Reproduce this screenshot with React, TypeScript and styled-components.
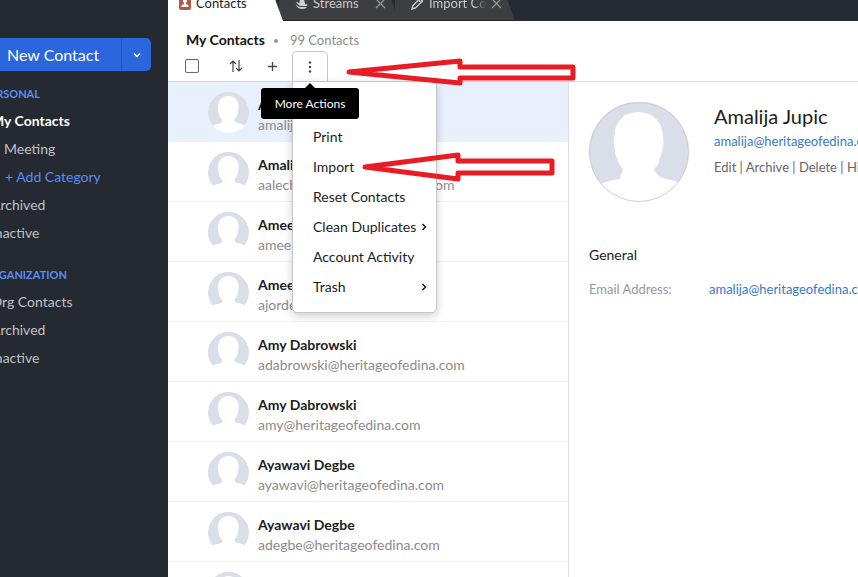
import React from "react";
import styled, { createGlobalStyle, css } from "styled-components";

const GlobalStyle = createGlobalStyle`
  * { box-sizing: border-box; }
  html, body, #root { height: 100%; }
  body {
    margin: 0;
    overflow: hidden;
    font-family: Lato, "Liberation Sans", sans-serif;
    font-size: 14px;
    line-height: 20px;
    color: #1c1c1c;
    background: #fff;
  }
  button, input { font: inherit; color: inherit; }
  button { border: 0; padding: 0; background: none; cursor: pointer; }
  a { color: inherit; text-decoration: none; }
  ul { list-style: none; margin: 0; padding: 0; }
  h1, h2, h3, p, dl, dd { margin: 0; font-weight: 400; }
`;

const Page = styled.div`
  position: relative;
  display: flex;
  height: 100vh;
  overflow: hidden;
`;

const Sidebar = styled.aside`
  flex: 0 0 168px;
  padding-top: 38px;
  background: #252932;
  color: #bfc1c6;
  overflow: hidden;
`;

const SplitButton = styled.div`
  display: flex;
  width: 151px;
  height: 33px;
  border-radius: 0 5px 5px 0;
  background: #2b66dd;
  color: #fff;
`;

const NewButton = styled.button`
  flex: 1;
  padding: 0 0 0 7px;
  font-size: 16px;
  text-align: left;
`;

const NewMenuButton = styled.button`
  display: flex;
  align-items: center;
  justify-content: center;
  width: 30px;
  border-left: 1px solid #2357c2;
`;

const NavGroup = styled.nav`
  margin: 13px 0 0 -17px;
  & + & { margin-top: 18px; }
`;

const NavTitle = styled.h3`
  height: 23px;
  font-size: 11px;
  font-weight: 700;
  color: #5b8def;
`;

const NavLink = styled.a<{ $tone?: "active" | "accent"; $indent?: number }>`
  display: block;
  height: 28px;
  padding-left: ${(p) => p.$indent ?? 0}px;
  line-height: 27px;
  white-space: nowrap;
  ${(p) => p.$tone === "active" && css`color: #fff; font-weight: 700;`}
  ${(p) => p.$tone === "accent" && css`color: #5b8def;`}
`;

const Main = styled.main`
  flex: 1;
  min-width: 0;
  display: flex;
  flex-direction: column;
`;

const TabBar = styled.div`
  display: flex;
  height: 21px;
  overflow: hidden;
  background: #252a35;
`;

const Tab = styled.button<{ $active?: boolean }>`
  display: flex;
  flex: none;
  align-items: center;
  gap: 5px;
  height: 33px;
  margin: -12px 0 0 -4px;
  width: ${(p) => (p.$active ? 119 : 120)}px;
  padding: ${(p) => (p.$active ? "0 18px 2px 15px" : "0 13px 2px 16px")};
  border-bottom: 1px solid ${(p) => (p.$active ? "#fff" : "#222")};
  font-size: 13px;
  white-space: nowrap;
  color: ${(p) => (p.$active ? "#1c1c1c" : "#c9c9c9")};
  background: ${(p) => (p.$active ? "#fff" : "#3d3e42")};
  clip-path: polygon(0 0, calc(100% - 12px) 0, 100% 100%, 0 100%);
  position: relative;
  z-index: ${(p) => (p.$active ? 2 : 1)};
  & > svg { flex: none; }
`;

const TabLabel = styled.span<{ $fade?: boolean }>`
  flex: 1;
  overflow: hidden;
  text-align: left;
  ${(p) => p.$fade && css`mask-image: linear-gradient(to right, #000 80%, transparent);`}
`;

const Heading = styled.header`
  display: flex;
  align-items: center;
  height: 30px;
  padding: 8px 0 0 18px;
  font-size: 13px;
  color: #8b8b8b;
`;

const Title = styled.h1`
  font-size: 14px;
  font-weight: 700;
  color: #111;
`;

const Dot = styled.span`
  width: 4px;
  height: 4px;
  margin: 2px 12px 0 9px;
  border-radius: 50%;
  background: #999;
`;

const Toolbar = styled.div`
  display: flex;
  align-items: stretch;
  height: 31px;
  padding-left: 17px;
  border-bottom: 1px solid #d6d6d6;
  color: #444;
`;

const Check = styled.input`
  appearance: none;
  align-self: center;
  width: 14px;
  height: 14px;
  margin: 0 18px 0 0;
  border: 1px solid #666;
  border-radius: 2px;
  background: #fff;
`;

const Tool = styled.button`
  display: flex;
  align-items: center;
  justify-content: center;
  width: 37px;
`;

const MoreWrap = styled.div`
  position: relative;
  width: 36px;
  height: 31px;
  margin-left: 1px;
`;

const MoreButton = styled.button`
  display: flex;
  align-items: center;
  justify-content: center;
  width: 36px;
  height: 31px;
  border: 1px solid #c6c6c6;
  border-radius: 5px 5px 0 0;
  background: #fff;
`;

const Menu = styled.ul`
  position: absolute;
  z-index: 5;
  top: 30px;
  left: 0;
  width: 145px;
  padding: 40px 8px 10px 20px;
  border: 1px solid #c6c6c6;
  border-radius: 0 0 5px 5px;
  background: #fff;
  color: #1c1c1c;
  box-shadow: 0 3px 8px rgba(0, 0, 0, 0.2);
`;

const MenuItem = styled.button`
  display: flex;
  align-items: center;
  justify-content: space-between;
  width: 100%;
  height: 30px;
  white-space: nowrap;
`;

const Tooltip = styled.div`
  position: absolute;
  z-index: 6;
  top: 37px;
  left: -31px;
  width: 98px;
  height: 31px;
  border-radius: 3px;
  background: #000;
  color: #fff;
  font-size: 12px;
  line-height: 31px;
  text-align: center;
  &::before {
    content: "";
    position: absolute;
    top: -5px;
    left: 44px;
    border: 5px solid transparent;
    border-top: 0;
    border-bottom-color: #000;
  }
`;

const Content = styled.div`
  flex: 1;
  min-height: 0;
  display: flex;
`;

const List = styled.ul`
  flex: 0 0 401px;
  overflow: hidden;
  border-right: 1px solid #dedede;
`;

const Row = styled.li<{ $selected?: boolean }>`
  display: flex;
  gap: 9px;
  height: 60px;
  padding: 10px 0 0 40px;
  border-bottom: 1px solid ${(p) => (p.$selected ? "#e8f0fe" : "#f0f0f0")};
  background: ${(p) => (p.$selected ? "#e8f0fe" : "#fff")};
`;

const RowText = styled.div`
  padding-top: 3px;
`;

const Name = styled.p`
  font-weight: 700;
`;

const Mail = styled.p`
  color: #8b8b8b;
`;

const Details = styled.section`
  flex: 1;
  min-width: 0;
  padding: 20px 0 0 20px;
  overflow: hidden;
  white-space: nowrap;
`;

const Profile = styled.div`
  display: flex;
  gap: 25px;
`;

const PersonName = styled.h2`
  margin: 2px 0 3px;
  font-size: 20px;
  line-height: 24px;
`;

const Link = styled.a`
  font-size: 13px;
  color: #3b78c9;
`;

const Actions = styled.p`
  margin-top: 6px;
  font-size: 13px;
  color: #666;
`;

const SectionTitle = styled.h3`
  margin-top: 43px;
  font-size: 14px;
`;

const Fields = styled.dl`
  display: grid;
  grid-template-columns: 120px 1fr;
  margin-top: 14px;
  font-size: 13px;
  color: #999;
`;

const ArrowLayer = styled.svg`
  position: absolute;
  z-index: 10;
  top: 50px;
  left: 340px;
  pointer-events: none;
`;

const AvatarSvg = styled.svg`
  flex: none;
`;

const Avatar = ({ large }: { large?: boolean }) => (
  <AvatarSvg width={large ? 100 : 41} height={large ? 100 : 41} viewBox="0 0 100 100" aria-hidden="true">
    <circle cx="50" cy="50" r="50" fill="#fff" />
    <path
      fill="#dadee9"
      d={
        large
          ? "M12 82 A50 50 0 1 1 88 82 Q90 80 86 79 C80 77 74 77 70 74 C67 71 65 68 65 67 C69 64 70 60 71 56 C74 49 75 42 74 34 C73 20 65 11 50 10 C44 10 40 12 36 13 C30 18 25 25 26 32 C23 38 26 46 26 51 C28 57 29 61 34 67 C33 71 31 73 31 77 Q20 78 12 82Z"
          : "M12 82 A50 50 0 1 1 88 82 C82 77 74 77 67 74 C63 69 65 65 70 60 C73 53 75 44 75 35 C74 19 64 10 50 10 C39 10 29 16 26 27 C23 35 25 43 26 50 C27 57 28 62 33 66 C36 71 35 75 29 77 Q20 78 12 82Z"
      }
    />
    {large && <circle cx="50" cy="50" r="49.5" fill="none" stroke="#cfcfd2" strokeWidth="1" />}
  </AvatarSvg>
);

const ChevronSvg = styled.svg`
  flex: none;
`;

const Chevron = ({ down }: { down?: boolean }) => (
  <ChevronSvg width="8" height="8" viewBox="0 0 8 8" fill="none" stroke="currentColor" strokeWidth="1.5">
    <path d={down ? "M1 2.5 L4 5.5 L7 2.5" : "M2.5 1 L5.5 4 L2.5 7"} />
  </ChevronSvg>
);

const Close = () => (
  <svg width="11" height="11" viewBox="0 0 11 11" stroke="#999" strokeWidth="1.2">
    <path d="M1 1 L10 10 M10 1 L1 10" />
  </svg>
);

const contacts = [
  ["Amalija Jupic", "amalija@heritageofedina.com"],
  ["Amalia Lechner", "aalechner@heritageofedina.com"],
  ["Ameen", "ameen@heritageofedina.com"],
  ["Ameen Jorde", "ajorde@heritageofedina.com"],
  ["Amy Dabrowski", "adabrowski@heritageofedina.com"],
  ["Amy Dabrowski", "amy@heritageofedina.com"],
  ["Ayawavi Degbe", "ayawavi@heritageofedina.com"],
  ["Ayawavi Degbe", "adegbe@heritageofedina.com"],
  ["", ""],
];

const menu = [
  { label: "Print" },
  { label: "Import" },
  { label: "Reset Contacts" },
  { label: "Clean Duplicates", more: true },
  { label: "Account Activity" },
  { label: "Trash", more: true },
];

export default function App() {
  return (
    <Page>
      <GlobalStyle />
      <Sidebar>
        <SplitButton>
          <NewButton>New Contact</NewButton>
          <NewMenuButton aria-label="More new items"><Chevron down /></NewMenuButton>
        </SplitButton>
        <NavGroup>
          <NavTitle>PERSONAL</NavTitle>
          <NavLink href="#my" $tone="active" $indent={8}>My Contacts</NavLink>
          <NavLink href="#meeting" $indent={21}>Meeting</NavLink>
          <NavLink href="#add" $tone="accent" $indent={22}>+ Add Category</NavLink>
          <NavLink href="#archived" $indent={8}>Archived</NavLink>
          <NavLink href="#inactive" $indent={8}>Inactive</NavLink>
        </NavGroup>
        <NavGroup>
          <NavTitle>ORGANIZATION</NavTitle>
          <NavLink href="#org" $indent={8}>Org Contacts</NavLink>
          <NavLink href="#org-archived" $indent={8}>Archived</NavLink>
          <NavLink href="#org-inactive" $indent={8}>Inactive</NavLink>
        </NavGroup>
      </Sidebar>
      <Main>
        <TabBar>
          <Tab $active>
            <svg width="12" height="14" viewBox="0 0 12 14">
              <rect width="12" height="14" rx="2" fill="#b05a43" />
              <circle cx="6" cy="5" r="2" fill="#fff" />
              <path d="M2.5 11 V9.5 Q4 8 5 8 V6 H7 V8 Q8 8 9.5 9.5 V11Z" fill="#fff" />
            </svg>
            <TabLabel>Contacts</TabLabel>
          </Tab>
          <Tab>
            <svg width="13" height="14" viewBox="0 0 13 14" fill="#d0d0d0">
              <circle cx="7" cy="3.5" r="2.5" />
              <path d="M4.5 5 H9.5 L10 8 L12.5 8.5 L12 10 H5 L1 6.5 L2 6 L4.5 7.5Z" />
              <path d="M0.5 8.5 L4.5 11 H12 Q11 13 7.5 13 Q3 13 0.5 8.5Z" />
            </svg>
            <TabLabel>Streams</TabLabel>
            <Close />
          </Tab>
          <Tab>
            <svg width="13" height="14" viewBox="0 0 13 14" fill="none" stroke="#d0d0d0" strokeWidth="1.4">
              <path d="M1 13 L2 9.5 L9 2.5 L11.5 5 L4.5 12Z M7.5 4 L10 6.5" />
            </svg>
            <TabLabel $fade>Import Contacts</TabLabel>
            <Close />
          </Tab>
        </TabBar>
        <Heading>
          <Title>My Contacts</Title>
          <Dot />
          <span>99 Contacts</span>
        </Heading>
        <Toolbar>
          <Check type="checkbox" aria-label="Select all contacts" />
          <Tool aria-label="Sort">
            <svg width="14" height="12" viewBox="0 0 14 12" fill="none" stroke="currentColor" strokeWidth="1.2">
              <path d="M4 12 V1 M1 4 L4 1 L7 4 M10 0 V11 M7 8 L10 11 L13 8" />
            </svg>
          </Tool>
          <Tool aria-label="Add">
            <svg width="9" height="9" viewBox="0 0 9 9" stroke="currentColor" strokeWidth="1.3">
              <path d="M4.5 0 V9 M0 4.5 H9" />
            </svg>
          </Tool>
          <MoreWrap>
            <MoreButton aria-label="More actions" aria-describedby="tip">
              <svg width="4" height="12" viewBox="0 0 4 12" fill="currentColor">
                <circle cx="2" cy="1.5" r="1.2" />
                <circle cx="2" cy="6" r="1.2" />
                <circle cx="2" cy="10.5" r="1.2" />
              </svg>
            </MoreButton>
            <Menu>
              {menu.map((m) => (
                <li key={m.label}>
                  <MenuItem>
                    {m.label}
                    {m.more && <Chevron />}
                  </MenuItem>
                </li>
              ))}
            </Menu>
            <Tooltip id="tip" role="tooltip">More Actions</Tooltip>
          </MoreWrap>
        </Toolbar>
        <Content>
          <List>
            {contacts.map(([name, mail], i) => (
              <Row key={i} $selected={i === 0}>
                <Avatar />
                <RowText>
                  <Name>{name}</Name>
                  <Mail>{mail}</Mail>
                </RowText>
              </Row>
            ))}
          </List>
          <Details>
            <Profile>
              <Avatar large />
              <div>
                <PersonName>Amalija Jupic</PersonName>
                <Link href="mailto:amalija@heritageofedina.com">amalija@heritageofedina.com</Link>
                <Actions>
                  <a href="#edit">Edit</a> | <a href="#archive">Archive</a> | <a href="#delete">Delete</a> | <a href="#history">History</a>
                </Actions>
              </div>
            </Profile>
            <SectionTitle>General</SectionTitle>
            <Fields>
              <dt>Email Address:</dt>
              <dd><Link href="mailto:amalija@heritageofedina.com">amalija@heritageofedina.com</Link></dd>
            </Fields>
          </Details>
        </Content>
      </Main>
      <ArrowLayer width="240" height="135" viewBox="0 0 240 135" fill="none" stroke="#e81c24" strokeWidth="5" aria-hidden="true">
        <path strokeLinejoin="round" d="M9 22 L120 11 V17 H233 V28 H120 V33 Z" />
        <path strokeLinejoin="round" d="M25 117 L118 105 V111 H212 V123 H118 V129 Z" />
      </ArrowLayer>
    </Page>
  );
}
